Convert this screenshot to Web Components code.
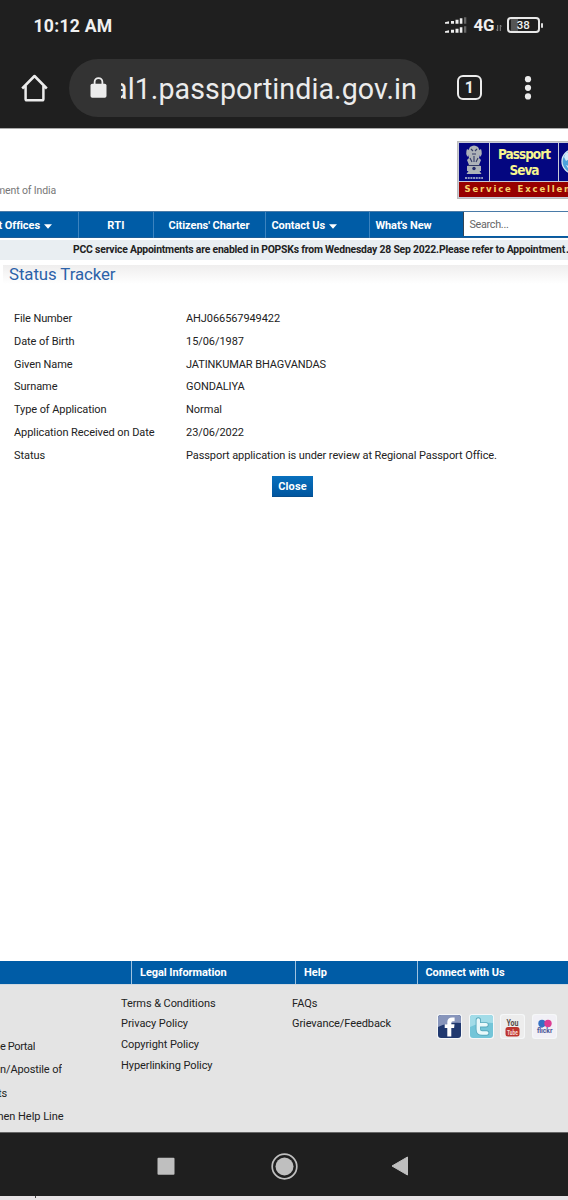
<!DOCTYPE html>
<html lang="en">
<head>
<meta charset="utf-8">
<title>Status Tracker</title>
<style>
html,body{margin:0;padding:0;background:#fff}
body{font-family:Roboto,"Liberation Sans",sans-serif;font-size:11px;color:#222;overflow:hidden}
</style>
</head>
<body>
<passport-screen></passport-screen>
<script>
function define(name, html) {
  customElements.define(name, class extends HTMLElement {
    connectedCallback() {
      if (this.shadowRoot) return;
      const t = document.createElement('template');
      t.innerHTML = typeof html === 'function' ? html(this) : html;
      this.attachShadow({mode: 'open'}).appendChild(t.content.cloneNode(true));
      if (this.hasAttribute('w')) fitWidth(this);
    }
  });
}

function fitWidth(el) {
  const s = el.shadowRoot.querySelector('span');
  const d = parseFloat(el.getAttribute('w')) - s.getBoundingClientRect().width;
  const n = el.textContent.length;
  if (n) s.style.letterSpacing = (d / n) + 'px';
}

/* A single-line label whose tracking is adjusted to fill the width in "w". */
define('fit-label', '<style>:host{display:inline-block;white-space:nowrap;flex:none}span{display:inline-block;white-space:pre}</style><span><slot></slot></span>');

define('status-bar', `<style>
:host{display:flex;height:50px;align-items:center;padding:0 25.5px 0 33.5px;box-sizing:border-box;color:#f0f0f0;line-height:50px}
.time{font-size:17.6px;font-weight:700;flex:1;padding-top:1px}
svg{display:block;flex:none}
.net{font-size:16.8px;font-weight:700;margin-left:6.5px}
.bat{display:flex;align-items:center;margin-left:5px}
.cell{width:28.5px;height:12px;border:2px solid #e8e8e8;border-radius:4px;font-size:11.5px;font-weight:500;line-height:13px;text-align:center;background:linear-gradient(90deg,transparent 2px,#555 2px,#555 9px,transparent 9px)}
.tip{width:2px;height:5px;background:#ddd;margin-left:1px;border-radius:1px}
</style>
<span class="time"><fit-label w="79">10:12 AM</fit-label></span>
<svg width="22" height="17" viewBox="0 0 22 17"><g fill="#eee"><path d="M0 5.3l4-1v2.4H0zM6 4h3v2.8H6zM10.5 2.8h3v4h-3zM14.8 1.2h2.6v5.6h-2.6zM0 14.3l4-1v2.4H0zM6 12.8h3v3H6zM10.5 11.8h3v4h-3zM14.8 10.2h2.6v5.6h-2.6z"/></g><path fill="#666" d="M19 .2h2.3v6.6H19zM19 9.2h2.3v6.6H19z"/></svg>
<span class="net"><fit-label w="21">4G</fit-label></span>
<svg width="6" height="8" viewBox="0 0 6 8" style="margin:6px 0 0 1.5px"><path d="M1.7 1v6M.3 5.5L1.7 7M4.3 7V1M4.3 1l1.4 1.5" stroke="#888" fill="none"/></svg>
<span class="bat"><span class="cell">38</span><span class="tip"></span></span>`);

define('address-bar', `<style>
:host{display:flex;height:78px;align-items:center;padding:0 33.5px 3px 20px;box-sizing:border-box;color:#ececec}
svg{display:block;flex:none}
.pill{width:360px;height:58px;border-radius:29px;background:#333;margin-left:20px;display:flex;align-items:center;padding:0 12px 0 21px;box-sizing:border-box}
.url{width:297px;margin-left:14px;overflow:hidden;display:flex;justify-content:flex-end;font-size:28.6px;line-height:40px;padding-top:3px}
.tab{width:21.5px;height:21.5px;border:2.6px solid #ececec;border-radius:6px;margin-left:27.5px;text-align:center;font-size:16px;font-weight:700;line-height:22.5px}
.menu{margin-left:auto}
</style>
<svg width="29" height="28" viewBox="0 0 29 28"><path d="M2.2 14.5L14.5 2 26.8 14.5M5.6 12v13q0 1.3 1.3 1.3h15.2q1.3 0 1.3-1.3V12" fill="none" stroke="#ececec" stroke-width="2.5" stroke-linejoin="round"/></svg>
<div class="pill"><svg width="17" height="21" viewBox="0 0 17 21"><rect x=".5" y="6.8" width="16" height="14" rx="1.8" fill="#ececec"/><path d="M4.6 8V5a3.9 3.9 0 0 1 7.8 0v3" fill="none" stroke="#ececec" stroke-width="1.8"/></svg>
<div class="url"><fit-label w="305">al1.passportindia.gov.in</fit-label></div></div>
<div class="tab">1</div>
<svg class="menu" width="14" height="26" viewBox="0 0 14 26"><g fill="#ececec"><circle cx="7" cy="4.2" r="3.1"/><circle cx="7" cy="12.8" r="3.1"/><circle cx="7" cy="21.4" r="3.1"/></g></svg>`);

define('seva-logo', `<style>
:host{display:block;width:111px;height:58px;box-sizing:border-box;background:#c9cbd8;border:1px solid #bdbdbd;border-right:0;padding:1px 0 1px 1px;overflow:hidden}
.top{display:grid;grid-template-columns:30px 68px 1fr;gap:1px;height:38px}
.top>*{background:#040680;overflow:hidden}
.name{font-size:13.5px;font-weight:700;color:#f7f58f;font-family:"DejaVu Sans Condensed","DejaVu Sans",sans-serif;font-stretch:condensed;display:flex;flex-direction:column;align-items:center;line-height:15.5px;padding-top:4px;box-sizing:border-box}
.motto{margin-top:1px;height:15px;background:#970000;color:#f6d36c;font:700 9.5px/14px "DejaVu Sans Condensed","DejaVu Sans",sans-serif;font-stretch:condensed;padding-left:5.5px;white-space:nowrap}
svg{display:block}
</style>
<div class="top"><svg width="30" height="38" viewBox="0 0 30 38"><g fill="#aeb3b8"><path d="M11 4q4-3 8 0l2.5 5-1.5 6 2 2-2 5H10l-2-5 2-2-1.5-6z"/><path d="M8 6q-2 5 1 8l2-6zM22 6q2 5-1 8l-2-6zM8 23q7-2 14 0v5H8zM9.5 28h11l2 3h-15z"/></g><path d="M12 6l2 2M18 6l-2 2M13 11h4M11 15l2 4M19 15l-2 4M15 13v6M9 22.5h12" stroke="#343b64" stroke-width="1.1"/><circle cx="15" cy="25.5" r="1.7" fill="#252c68"/><path d="M6 35h18" stroke="#8e97bd" stroke-width="2.2" stroke-dasharray="2 .7"/></svg>
<div class="name"><fit-label w="52">Passport</fit-label><fit-label w="29">Seva</fit-label></div>
<svg width="10" height="38" viewBox="0 0 10 38"><circle cx="15" cy="18.5" r="12" fill="#4da3dc" stroke="#d8eaf5" stroke-width="1.3"/><path d="M7 10l3-1v7l-3 2-2-4zM7 22l3 1v4z" fill="#d2eafa"/></svg></div>
<div class="motto"><fit-label w="122">Service Excellence</fit-label></div>`);

define('site-header', `<style>
:host{display:flex;height:83px;background:#fff;justify-content:space-between;color:#777;border-top:1px solid #aaa;box-sizing:border-box}
.gov{width:56px;display:flex;justify-content:flex-end;overflow:hidden;padding-top:52px;line-height:20px;font-size:10.5px}
seva-logo{margin-top:12px}
</style><div class="gov"><fit-label w="60">ment of India</fit-label></div><seva-logo></seva-logo>`);

define('nav-item', `<style>
:host{display:flex;align-items:center;box-sizing:border-box;border-right:1px solid #3c83bf;color:#fff;font-weight:700;height:100%;padding-top:1px}
:host([last]){border-right:0}
svg{display:none;margin:2px 0 0 4px;flex:none}
:host([menu]) svg{display:block}
</style><slot></slot><svg width="8" height="5" viewBox="0 0 8 5"><path d="M0 .3h8L4 4.7z" fill="#fff"/></svg>`);

define('main-nav', `<style>
:host{display:grid;grid-template-columns:79px 75px 112px 104px 93px 1fr;height:27px;background:#005ca6;box-sizing:border-box;border-top:1px solid #4a7ba8;border-bottom:1px solid #1c5c96;line-height:25px}
.c{justify-content:center}.l{padding-left:5.5px}.first{justify-content:flex-end;padding-right:26px;overflow:hidden}
.search{background:#fff;color:#666;padding-left:5.5px;line-height:25px;height:24px;border-left:1px solid #345;font-size:10.8px}
</style>
<nav-item menu class="first"><fit-label w="41">t Offices</fit-label></nav-item>
<nav-item class="c"><fit-label w="17.5">RTI</fit-label></nav-item>
<nav-item class="c" style="padding-right:1px"><fit-label w="81">Citizens' Charter</fit-label></nav-item>
<nav-item menu class="l"><fit-label w="53.5">Contact Us</fit-label></nav-item>
<nav-item last class="l"><fit-label w="56">What's New</fit-label></nav-item>
<div class="search"><fit-label w="39">Search...</fit-label></div>`);

define('news-ticker', `<style>
:host{display:block;margin-top:2px;height:20px;line-height:20px;background:#e9eef2;padding-left:73px;font-weight:700;font-size:10.4px;color:#222;white-space:nowrap;overflow:hidden}
</style><fit-label w="492">PCC service Appointments are enabled in POPSKs from Wednesday 28 Sep 2022.Please refer to Appointment</fit-label><span style="margin-left:1px">.</span>`);

define('page-title', `<style>
:host{display:block;margin:5px 0 0 3px;height:19px;line-height:19px;padding-left:6px;font-size:16.8px;color:#2c62a9;background:linear-gradient(#efeeee,#fff)}
</style><fit-label w="106.5">Status Tracker</fit-label>`);

define('detail-row', el => `<style>
:host{display:grid;grid-template-columns:172px 1fr;height:22.75px;line-height:22.75px;padding-left:14px}
</style><fit-label w="${el.getAttribute('lw')}">${el.getAttribute('label')}</fit-label><fit-label w="${el.getAttribute('vw')}">${el.getAttribute('value')}</fit-label>`);

define('action-button', `<style>
:host{display:flex;justify-content:center;width:41px;height:21px;line-height:21px;box-sizing:border-box;color:#fff;font-weight:700;background:linear-gradient(#0870bd,#00569f);border-bottom:1px solid #064d8c}
</style><fit-label w="28.5">Close</fit-label>`);

define('footer-head', `<style>
:host{display:grid;grid-template-columns:131px 164px 121.5px 1fr;height:23px;line-height:23px;background:#005ca6;color:#fff;font-weight:700}
div{border-left:1px solid #9fc2df;padding-left:8px}div.blank{border:0}
</style><div class="blank"></div><div><fit-label w="86.5">Legal Information</fit-label></div><div><fit-label w="23">Help</fit-label></div><div><fit-label w="79">Connect with Us</fit-label></div>`);

define('social-icon', el => {
  const k = el.getAttribute('kind');
  const art = {
    facebook: '<rect x="1" y="1" width="23" height="23" rx="3" fill="#20396f"/><path d="M1 10V4q0-3 3-3h17q3 0 3 3v5Q12 8 1 13z" fill="#8795bb"/><path d="M10.3 22.5v-8.5H7.7v-3.8h2.6V8.2q0-4.7 4.9-4.7h2.4v3.7h-1.7q-1.6 0-1.6 1.6v1.4h3.2l-.4 3.8h-2.8v8.5z" fill="#fff"/>',
    twitter: '<rect x="1" y="1" width="23" height="23" rx="3" fill="#73c5d8"/><path d="M1 10V4q0-3 3-3h17q3 0 3 3v5Q12 8 1 13z" fill="#a2dce8"/><path d="M9.3 6v9.2q0 3.8 3.8 3.8h4.6M9.3 10.8h7.8" fill="none" stroke="#5aa9bd" stroke-width="5.3" stroke-linecap="round"/><path d="M9.3 6v9.2q0 3.8 3.8 3.8h4.6M9.3 10.8h7.8" fill="none" stroke="#e9f9fb" stroke-width="3.5" stroke-linecap="round"/>',
    youtube: '<rect x="1" y="1" width="23" height="23" rx="3" fill="#ededed"/><text x="12.5" y="12" text-anchor="middle" font-size="9.5" font-weight="700" fill="#554b48" textLength="12" lengthAdjust="spacingAndGlyphs">You</text><rect x="5.5" y="13" width="14" height="9.5" rx="2.5" fill="#bd352e"/><text x="12.5" y="20.8" text-anchor="middle" font-size="8" font-weight="700" fill="#f8dcd8" textLength="11" lengthAdjust="spacingAndGlyphs">Tube</text>',
    flickr: '<rect x="1" y="1" width="23" height="23" rx="3" fill="#f1f0f6"/><circle cx="10" cy="9.5" r="3.7" fill="#3470c4"/><circle cx="16" cy="9.5" r="3.7" fill="#db3d93"/><text x="12.7" y="19" text-anchor="middle" font-size="6.6" font-weight="700" fill="#4a5697" textLength="15.5" lengthAdjust="spacingAndGlyphs">flickr</text>'
  }[k];
  return `<style>:host{display:block;width:25px;height:25px;background:#f5f7f8;border-radius:3px}svg{display:block}</style><svg width="25" height="25" viewBox="0 0 25 25" font-family="Roboto,sans-serif">${art}</svg>`;
});

define('footer-body', `<style>
:host{display:grid;grid-template-columns:121px 171px 145px 1fr;height:148px;background:#e4e4e4;color:#222;box-sizing:border-box;border-top:1px solid #cfd8e0;overflow:hidden}
.a{padding-top:50px;line-height:23.4px}
.a div{overflow:hidden;display:flex;justify-content:flex-end;height:23.4px}
.b{padding-top:8.5px;line-height:20.8px}.b fit-label{display:block;height:20.8px}
.s{display:flex;gap:6.7px;padding-top:28.5px;align-items:flex-start}
</style>
<div class="a"><div style="width:35px"><fit-label w="35">e Portal</fit-label></div><div style="width:62px"><fit-label w="62">n/Apostile of</fit-label></div><div style="width:7px"><fit-label w="9">ts</fit-label></div><div style="width:63.5px"><fit-label w="66">nen Help Line</fit-label></div></div>
<div class="b"><fit-label w="94.5">Terms &amp; Conditions</fit-label><fit-label w="67">Privacy Policy</fit-label><fit-label w="78">Copyright Policy</fit-label><fit-label w="91.5">Hyperlinking Policy</fit-label></div>
<div class="b"><fit-label w="25.5">FAQs</fit-label><fit-label w="99">Grievance/Feedback</fit-label></div>
<div class="s"><social-icon kind="facebook"></social-icon><social-icon kind="twitter"></social-icon><social-icon kind="youtube"></social-icon><social-icon kind="flickr"></social-icon></div>`);

define('system-nav', `<style>
:host{display:block;height:63.5px;background:#1f1f1f;border-top:1px solid #666;box-sizing:border-box}
.row{display:flex;align-items:center;padding-left:157px;gap:104px;height:66px}
svg{display:block}
</style><div class="row">
<svg width="18" height="18" viewBox="0 0 18 18"><rect x=".5" y=".7" width="17" height="17" rx="1" fill="#bfbfbf"/></svg>
<svg width="27" height="27" viewBox="0 0 27 27" style="margin-left:-8.5px"><circle cx="13.5" cy="13.5" r="12.3" fill="none" stroke="#bfbfbf" stroke-width="1.7"/><circle cx="13.5" cy="13.5" r="9" fill="#bfbfbf"/></svg>
<svg width="18" height="20" viewBox="0 0 18 20" style="margin-left:-11px"><path d="M1 10L16.5 1v18z" fill="#bfbfbf" stroke="#bfbfbf" stroke-linejoin="round"/></svg></div>`);

define('passport-screen', `<style>
:host{display:flex;flex-direction:column;width:568px;height:1200px;overflow:hidden;background:#fff}
status-bar,address-bar,site-header,main-nav,news-ticker,page-title,.rows,action-button,footer-head,footer-body,system-nav,.sliver{flex:none}
.chrome{background:#1f1f1f;height:128px;flex:none}
.rows{padding-top:24px}
action-button{margin:8.5px 0 0 272px}
.space{flex:1}
.sliver{height:4.5px;background:#e7e3e6;display:flex;padding-left:35px}
.sliver i{width:1px;height:2px;background:#444}
</style>
<div class="chrome"><status-bar></status-bar><address-bar></address-bar></div>
<site-header></site-header><main-nav></main-nav><news-ticker></news-ticker>
<page-title></page-title>
<div class="rows">
<detail-row label="File Number" lw="58" value="AHJ066567949422" vw="94"></detail-row>
<detail-row label="Date of Birth" lw="60.5" value="15/06/1987" vw="58"></detail-row>
<detail-row label="Given Name" lw="58.5" value="JATINKUMAR BHAGVANDAS" vw="140"></detail-row>
<detail-row label="Surname" lw="43.5" value="GONDALIYA" vw="58.5"></detail-row>
<detail-row label="Type of Application" lw="92.5" value="Normal" vw="36"></detail-row>
<detail-row label="Application Received on Date" lw="140.5" value="23/06/2022" vw="58"></detail-row>
<detail-row label="Status" lw="31" value="Passport application is under review at Regional Passport Office." vw="310"></detail-row>
</div>
<action-button></action-button>
<div class="space"></div>
<footer-head></footer-head><footer-body></footer-body><system-nav></system-nav>
<div class="sliver"><i></i></div>`);
</script>
</body>
</html>
